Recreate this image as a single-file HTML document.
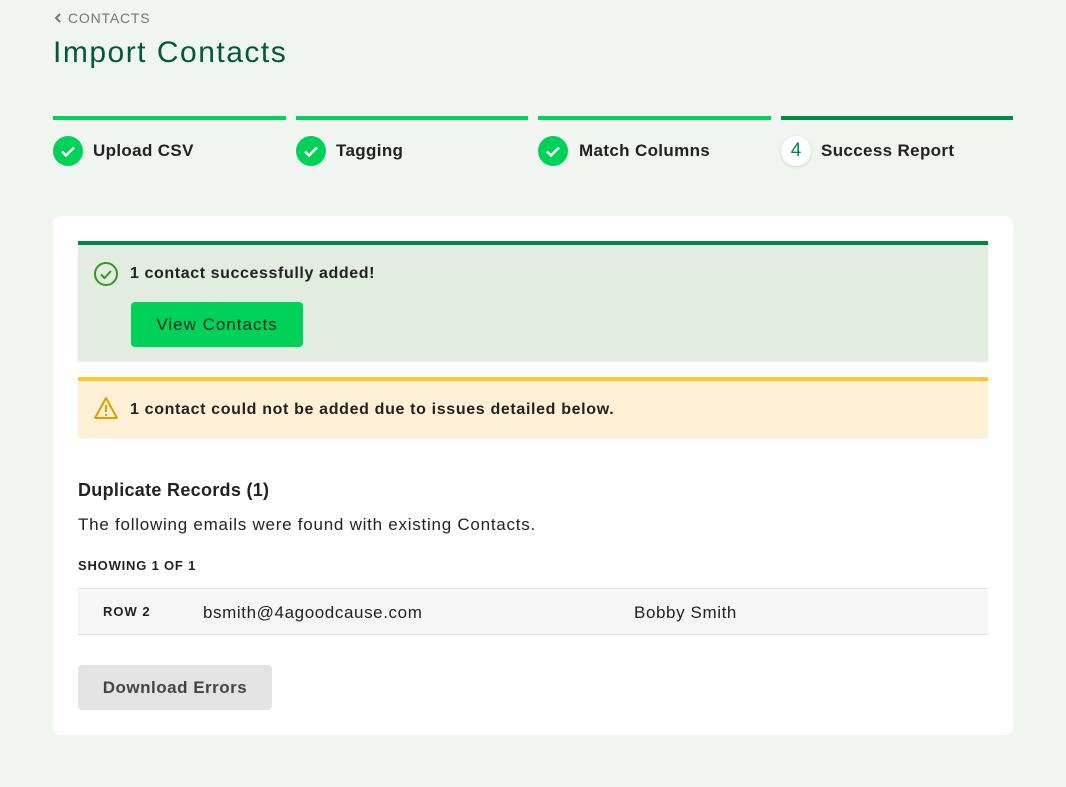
<!DOCTYPE html><html><head><style>
*{margin:0;padding:0;box-sizing:border-box}
body{width:1066px;height:787px;background:#f0f5ef;font-family:"Liberation Sans",sans-serif;color:#222;position:relative;overflow:hidden}
.a{position:absolute;white-space:nowrap}
.bar{position:absolute;top:116px;height:4px;background:#00d158}
.c{position:absolute;top:136px;width:30px;height:30px;border-radius:50%;background:#00d158}
.st{position:absolute;top:141px;font-size:17px;font-weight:bold;color:#222;letter-spacing:.35px}
</style></head><body>
<div class="a" style="left:54px;top:10px;font-size:14px;color:#777;letter-spacing:.8px"><svg width="8" height="10" style="margin-right:6px;vertical-align:-0px"><path d="M6 1L2 5l4 4" stroke="#777" stroke-width="2" fill="none"/></svg>CONTACTS</div>
<div class="a" style="left:53px;top:36px;font-size:30px;color:#00593a;letter-spacing:1.5px">Import Contacts</div>
<div class="bar" style="left:53px;width:233px"></div>
<div class="bar" style="left:296px;width:232px"></div>
<div class="bar" style="left:538px;width:233px"></div>
<div class="bar" style="left:781px;width:232px;background:#00874a"></div>
<div class="c" style="left:53px"><svg width="30" height="30"><path d="M9 15.5l4 4 8-8" stroke="#fff" stroke-width="2.4" fill="none"/></svg></div>
<div class="c" style="left:296px"><svg width="30" height="30"><path d="M9 15.5l4 4 8-8" stroke="#fff" stroke-width="2.4" fill="none"/></svg></div>
<div class="c" style="left:538px"><svg width="30" height="30"><path d="M9 15.5l4 4 8-8" stroke="#fff" stroke-width="2.4" fill="none"/></svg></div>
<div class="c" style="left:781px;background:#fff;box-shadow:0 1px 3px rgba(0,0,0,.15);text-align:center;line-height:30px;font-size:19px;color:#00874a">4</div>
<div class="st" style="left:93px">Upload CSV</div>
<div class="st" style="left:336px">Tagging</div>
<div class="st" style="left:579px">Match Columns</div>
<div class="st" style="left:821px">Success Report</div>
<div class="a" style="left:53px;top:216px;width:960px;height:519px;background:#fff;border-radius:8px"></div>
<div class="a" style="left:78px;top:241px;width:910px;height:120px;background:#e2ece0;border-top:4px solid #00874a;box-shadow:0 1px 2px rgba(0,0,0,.08)"></div>
<svg class="a" style="left:93px;top:261px" width="26" height="26"><circle cx="13" cy="13" r="11" stroke="#2e9b1a" stroke-width="2" fill="none"/><path d="M8 13.5l3.5 3.5 6.5-7" stroke="#2e9b1a" stroke-width="2" fill="none"/></svg>
<div class="a" style="left:130px;top:265px;font-size:16px;font-weight:bold;letter-spacing:.6px">1 contact successfully added!</div>
<div class="a" style="left:131px;top:302px;width:172px;height:45px;background:#00d158;border-radius:4px;text-align:center;line-height:45px;font-size:17px;color:#1e2b22;letter-spacing:1px">View Contacts</div>
<div class="a" style="left:78px;top:377px;width:910px;height:60px;background:#fff0d6;border-top:4px solid #ffc62e;box-shadow:0 1px 2px rgba(0,0,0,.08)"></div>
<svg class="a" style="left:93px;top:396px" width="26" height="24"><path d="M13 2L2 22h22z" stroke="#e39b00" stroke-width="2" fill="none" stroke-linejoin="round"/><path d="M13 9v7M13 18v2" stroke="#e39b00" stroke-width="2"/></svg>
<div class="a" style="left:130px;top:401px;font-size:16px;font-weight:bold;letter-spacing:.65px">1 contact could not be added due to issues detailed below.</div>
<div class="a" style="left:78px;top:480px;font-size:18px;font-weight:bold;letter-spacing:.3px">Duplicate Records (1)</div>
<div class="a" style="left:78px;top:515px;font-size:17px;letter-spacing:.75px">The following emails were found with existing Contacts.</div>
<div class="a" style="left:78px;top:558px;font-size:13px;font-weight:bold;letter-spacing:.8px">SHOWING 1 OF 1</div>
<div class="a" style="left:78px;top:588px;width:910px;height:47px;background:#f6f6f6;border-top:1px solid #e0e0e0;border-bottom:1px solid #e0e0e0"></div>
<div class="a" style="left:103px;top:604px;font-size:13px;font-weight:bold;letter-spacing:1px">ROW 2</div>
<div class="a" style="left:203px;top:603px;font-size:17px;letter-spacing:.6px">bsmith@4agoodcause.com</div>
<div class="a" style="left:634px;top:603px;font-size:17px;letter-spacing:.6px">Bobby Smith</div>
<div class="a" style="left:78px;top:665px;width:194px;height:45px;background:#e3e3e3;border-radius:4px;text-align:center;line-height:45px;font-size:17px;font-weight:bold;color:#444;letter-spacing:.5px">Download Errors</div>
</body></html>
